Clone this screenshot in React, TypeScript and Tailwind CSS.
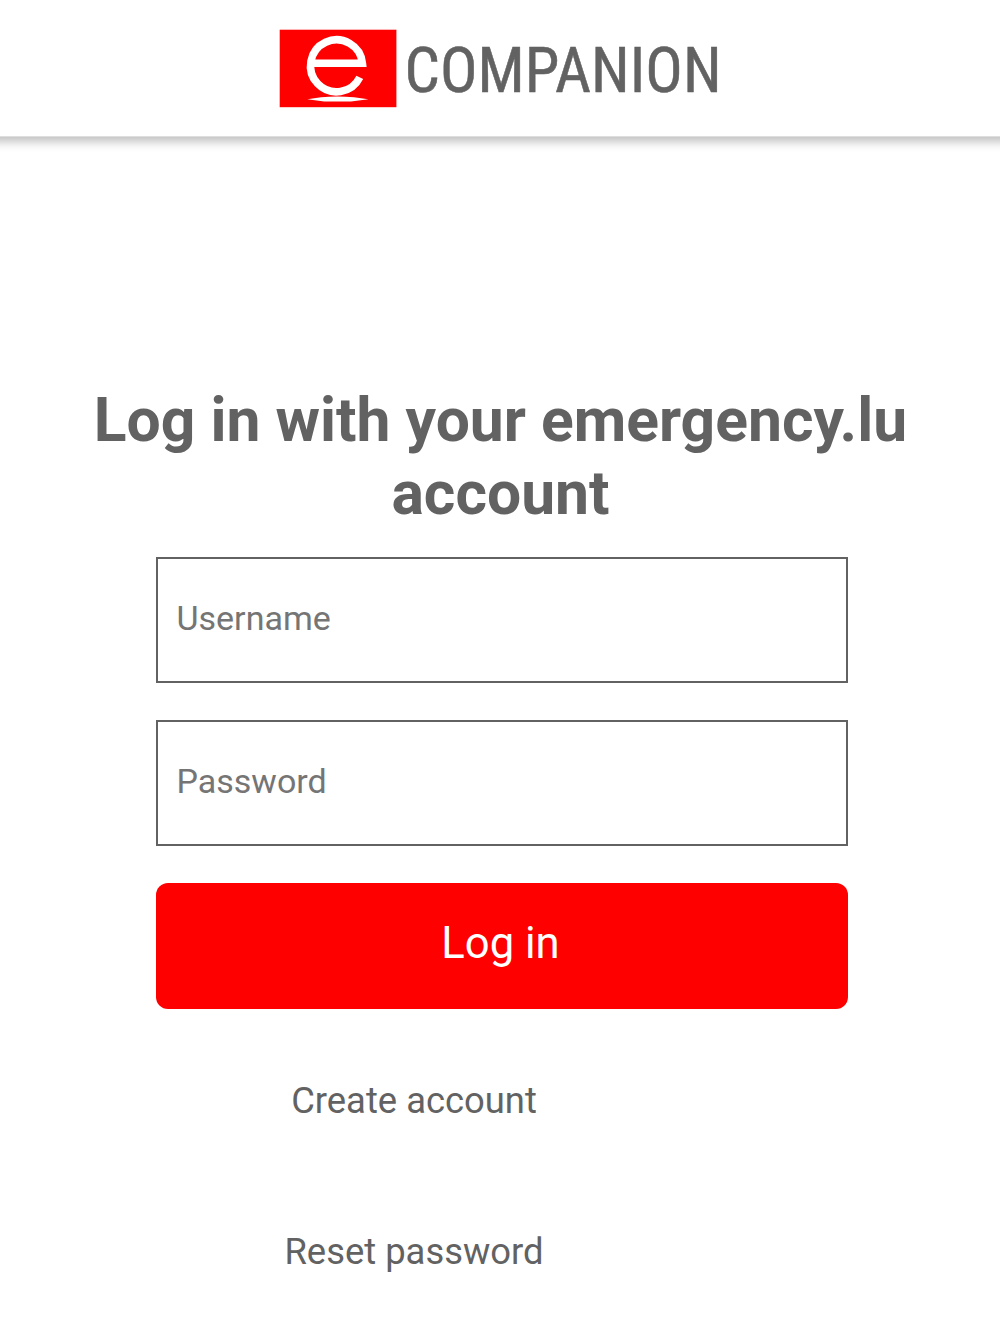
import { useState } from "react";

function Logo() {
  return (
    <svg width="442" height="80" viewBox="0 0 442 80" role="img" aria-label="e-Companion">
      <rect x="0.7" y="1.7" width="116.7" height="77.5" fill="#ff0000" />
      {/* mark: open ring with a crossbar, standing on its shadow */}
      <path
        d="M30.8 35.3H83.4A26 26 0 1 0 80.8 49.4"
        fill="none"
        stroke="#fff"
        strokeWidth="7.6"
        strokeLinejoin="miter"
      />
      <path d="M28.4 71.3L42 69.2Q58 67.6 75 69.2L89.4 71.3L72 73.4H45Z" fill="#fff" />
      <text
        x="125.6"
        y="63.6"
        textLength="317"
        lengthAdjust="spacingAndGlyphs"
        strokeWidth="0.5"
        className="fill-[#626262] stroke-[#626262] font-['Roboto_Condensed',Roboto,sans-serif] text-[62.5px] font-stretch-condensed"
      >
        COMPANION
      </text>
    </svg>
  );
}

function Field({
  type,
  label,
  value,
  onChange,
}: {
  type: string;
  label: string;
  value: string;
  onChange: (value: string) => void;
}) {
  return (
    <input
      type={type}
      placeholder={label}
      aria-label={label}
      value={value}
      onChange={(e) => onChange(e.target.value)}
      className="h-[126px] w-full border-2 border-[#626262] bg-white px-[18.5px] pb-[5px] text-[34px] text-[#626262] outline-none placeholder:text-[#757575]"
    />
  );
}

export default function App() {
  const [username, setUsername] = useState("");
  const [password, setPassword] = useState("");

  return (
    <div className="min-h-[1334px] overflow-hidden bg-white font-[Roboto,sans-serif] text-[#626262]">
      <header className="-mx-4 flex h-[137px] justify-center border-b border-[#dedede] pt-7 shadow-[0_3px_10px_1px_rgba(0,0,0,0.28)]">
        <Logo />
      </header>

      <main className="flex flex-col items-center pt-[247px]">
        <h1 className="ml-px w-[860px] text-center text-[60.6px] leading-[73px] font-bold">
          Log in with your emergency.lu account
        </h1>

        <form
          onSubmit={(e) => e.preventDefault()}
          className="mt-[27px] ml-1 flex w-[692px] flex-col gap-[37px]"
        >
          <Field type="text" label="Username" value={username} onChange={setUsername} />
          <Field type="password" label="Password" value={password} onChange={setPassword} />
          <button
            type="submit"
            className="h-[126px] rounded-xl bg-[#ff0000] pr-[3px] pb-1 text-[43.6px] text-white"
          >
            Log in
          </button>
        </form>

        <nav className="mt-[71px] mr-[172px] flex flex-col items-center gap-[109px] text-[36.4px] leading-[42px]">
          <a href="#create">Create account</a>
          <a href="#reset">Reset password</a>
        </nav>
      </main>
    </div>
  );
}
